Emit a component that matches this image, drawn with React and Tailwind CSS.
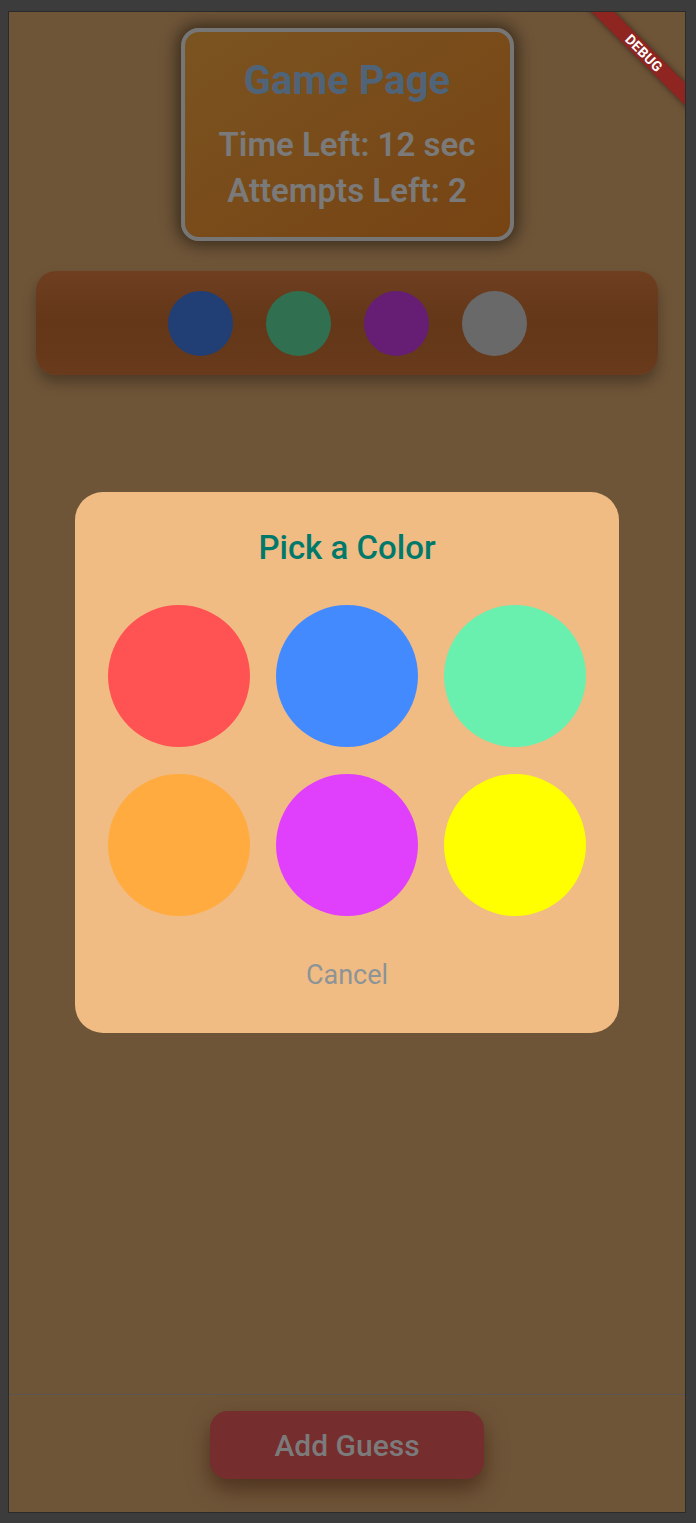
const slots = ["#213f75", "#306f50", "#661e75", "#696969"];
const choices = ["#ff5252", "#448aff", "#69f0ae", "#ffab40", "#e040fb", "#ffff00"];

const App = () => {
  return (
    <div
      className="w-[696px] h-[1523px] bg-[#3c3c3c] pl-[8px] pt-[11px]"
      style={{ fontFamily: "Roboto, 'Noto Sans', sans-serif" }}
    >
      <div className="relative w-[678px] h-[1502px] border border-[#2b2b2b] bg-[#6f5538] overflow-hidden flex flex-col">
        {/* header card */}
        <div className="flex justify-center pt-[16px]">
          <div className="w-[333px] h-[213px] rounded-[18px] border-[4px] border-[#767676] bg-gradient-to-br from-[#7a5420] to-[#774313] shadow-[0_0_16px_5px_rgba(0,0,0,0.45)] flex flex-col items-center pt-[26px]">
            <h1 className="text-[40px] leading-[46px] font-bold text-[#4f6479]">Game Page</h1>
            <p className="mt-[22px] text-[33px] leading-[38px] font-semibold text-[#7a7a7a]">Time Left: 12 sec</p>
            <p className="mt-[8px] text-[33px] leading-[38px] font-semibold text-[#7a7a7a]">Attempts Left: 2</p>
          </div>
        </div>

        {/* current guess row */}
        <div className="mx-[27px] mt-[30px] h-[104px] rounded-[20px] bg-gradient-to-b from-[#6e3e1f] via-[#643719] to-[#693a1c] shadow-[0_8px_14px_rgba(0,0,0,0.3)] flex items-center justify-center gap-[33px]">
          {slots.map((c) => (
            <div key={c} className="w-[65px] h-[65px] rounded-full" style={{ backgroundColor: c }} />
          ))}
        </div>

        <div className="flex-1" />

        {/* bottom bar */}
        <div className="border-t border-[#5a5550] pt-[16px] pb-[33px] flex justify-center">
          <button className="w-[274px] h-[68px] rounded-[18px] bg-[#762d2d] text-[30px] font-medium text-[#7b7b7b] shadow-[0_10px_22px_rgba(50,20,8,0.55)]">
            Add Guess
          </button>
        </div>

        {/* dialog */}
        <div className="absolute inset-0 flex items-center justify-center">
          <div className="w-[544px] rounded-[28px] bg-[#f0bc84] flex flex-col items-center pt-[37px] pb-[42px] px-[33px]">
            <h2 className="text-[33px] leading-[38px] font-medium text-[#00796b]">Pick a Color</h2>
            <div className="mt-[38px] grid grid-cols-3 gap-x-[26px] gap-y-[27px]">
              {choices.map((c) => (
                <div key={c} className="w-[142px] h-[142px] rounded-full" style={{ backgroundColor: c }} />
              ))}
            </div>
            <button className="mt-[43px] text-[27px] leading-[32px] text-[#8d9497]">Cancel</button>
          </div>
        </div>

        {/* debug banner */}
        <div className="absolute left-[535px] top-[33px] w-[200px] h-[16px] rotate-45 bg-[#8f2521] shadow-[0_0_6px_rgba(0,0,0,0.5)] flex items-center justify-center">
          <span className="text-[14px] leading-none font-bold text-white tracking-[0.3px]">DEBUG</span>
        </div>
      </div>
    </div>
  );
};

export default App;
